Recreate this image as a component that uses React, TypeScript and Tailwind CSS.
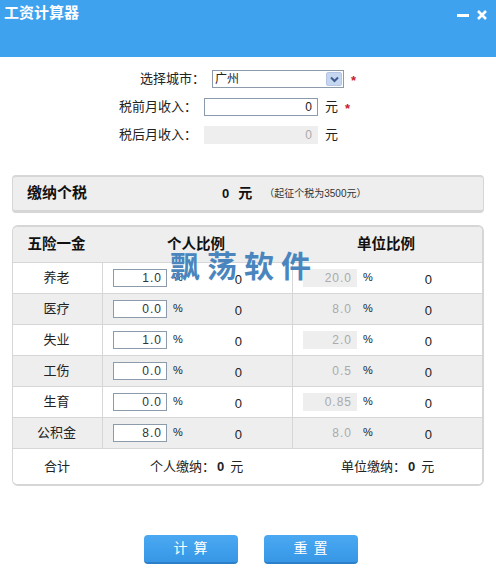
const FONT = "font-['Liberation_Sans','Noto_Sans_CJK_SC',sans-serif]"

type Row = { name: string; own: string; unit: string; unitBox: boolean }

const ROWS: Row[] = [
  { name: '养老', own: '1.0', unit: '20.0', unitBox: true },
  { name: '医疗', own: '0.0', unit: '8.0', unitBox: false },
  { name: '失业', own: '1.0', unit: '2.0', unitBox: true },
  { name: '工伤', own: '0.0', unit: '0.5', unitBox: false },
  { name: '生育', own: '0.0', unit: '0.85', unitBox: true },
  { name: '公积金', own: '8.0', unit: '8.0', unitBox: false },
]

function FormRow({ label, children }: { label: string; children: React.ReactNode }) {
  return (
    <div className="flex h-[18px] items-center">
      <span className="w-[197px] text-right text-[13px] text-[#222]">{label}</span>
      {children}
    </div>
  )
}

function Star() {
  return <span className="text-[13px] font-bold text-[#c8202c]">*</span>
}

function RateRow({ row, shaded }: { row: Row; shaded: boolean }) {
  return (
    <div className={`grid h-[31px] grid-cols-[90px_190px_189px] border-b border-[#d6d6d6] text-[13px] ${shaded ? 'bg-[#eeeeee]' : 'bg-white'}`}>
      <div className="flex items-center justify-center border-r border-[#d6d6d6] pr-[2px] text-[#222]">{row.name}</div>
      <div className="flex items-center border-r border-[#d6d6d6] pl-[10px]">
        <div className="flex h-[18px] w-[54px] items-center justify-end border border-[#8b9bac] bg-white pr-[4px] text-[12px] tracking-[1px] text-[#333]">
          {row.own}
        </div>
        <span className="ml-[6px] mb-[2px] text-[11px] text-[#222]">%</span>
        <span className="ml-[52px] mt-[3px] text-[#222]">0</span>
      </div>
      <div className="flex items-center pl-[10px]">
        <div className={`flex h-[18px] w-[54px] items-center justify-end pr-[5px] text-[12px] tracking-[1px] text-[#aaa] ${row.unitBox ? 'bg-[#eeeeee]' : ''}`}>
          {row.unit}
        </div>
        <span className="ml-[6px] mb-[2px] text-[11px] text-[#222]">%</span>
        <span className="ml-[52px] mt-[3px] text-[#222]">0</span>
      </div>
    </div>
  )
}

export default function App() {
  return (
    <div className={`relative h-[576px] w-[496px] overflow-hidden bg-white ${FONT}`}>
      <header className="flex h-[57px] items-start justify-between bg-[#3fa2ee] pl-[4px] pr-[9px] pt-[2px]">
        <span className="text-[15px] font-bold text-white">工资计算器</span>
        <div className="mt-[8px] flex items-center gap-[8px]">
          <svg width="12" height="10" viewBox="0 0 12 10">
            <rect x="0" y="4" width="12" height="3" fill="#fff" />
          </svg>
          <svg width="10" height="10" viewBox="0 0 10 10">
            <path d="M1 1l8 8M9 1l-8 8" stroke="#fff" strokeWidth="2.6" />
          </svg>
        </div>
      </header>

      <div className="mt-[13px] flex flex-col gap-[10px]">
        <div className="flex h-[18px] items-center">
          <span className="w-[205px] text-right text-[13px] text-[#222]">选择城市：</span>
          <div className="ml-[7px] flex h-[18px] w-[132px] items-center justify-between border border-[#8b9bac] bg-white pl-[2px] pr-[1px] text-[12px] text-[#222]">
            广州
            <span className="flex h-[14px] w-[16px] items-center justify-center rounded-[2px] border border-[#b4c6e4] bg-[#c5d6f0]">
              <svg width="9" height="7" viewBox="0 0 9 7">
                <path d="M1 1.5l3.5 3.5L8 1.5" fill="none" stroke="#3f5c8e" strokeWidth="2" />
              </svg>
            </span>
          </div>
          <span className="ml-[7px] mt-[2px]"><Star /></span>
        </div>
        <FormRow label="税前月收入：">
          <div className="ml-[7px] flex h-[18px] w-[114px] items-center justify-end border border-[#8b9bac] bg-white pr-[5px] text-[12px] text-[#222]">0</div>
          <span className="ml-[7px] text-[13px] text-[#222]">元</span>
          <span className="ml-[7px] mt-[2px]"><Star /></span>
        </FormRow>
        <FormRow label="税后月收入：">
          <div className="ml-[7px] flex h-[18px] w-[114px] items-center justify-end bg-[#eeeeee] pr-[6px] text-[12px] text-[#aaa]">0</div>
          <span className="ml-[7px] text-[13px] text-[#222]">元</span>
        </FormRow>
      </div>

      <section className="mx-[12px] mt-[31px] flex h-[38px] items-center rounded-[4px] border-x border-b-[3px] border-t-2 border-[#d6d6d6] bg-[#eeeeee] pl-[14px]">
        <b className="w-[195px] text-[15px] text-[#111]">缴纳个税</b>
        <b className="text-[13px] text-[#111]">0</b>
        <b className="ml-[9px] text-[14px] text-[#111]">元</b>
        <span className="ml-[12px] text-[10px] text-[#333]">（起征个税为3500元）</span>
      </section>

      <section className="mx-[12px] mt-[12px] h-[261px] overflow-hidden rounded-[6px] border-y-2 border-l border-r-2 border-[#d6d6d6]">
        <div className="grid h-[36px] grid-cols-[90px_190px_189px] items-center border-b border-[#d6d6d6] bg-[#eeeeee] text-[14.5px] font-bold text-[#111]">
          <span className="pr-[3px] text-center">五险一金</span>
          <span className="pr-[4px] text-center">个人比例</span>
          <span className="pr-[3px] text-center">单位比例</span>
        </div>
        {ROWS.map((row, i) => (
          <RateRow key={row.name} row={row} shaded={i % 2 === 1} />
        ))}
        <div className="grid h-[36px] grid-cols-[90px_190px_189px] items-center bg-white text-[13px] text-[#222]">
          <span className="pr-[2px] text-center">合计</span>
          <span className="pl-[47px]">个人缴纳：<b className="ml-[2px]">0</b><span className="ml-[6px]">元</span></span>
          <span className="pl-[48px]">单位缴纳：<b className="ml-[2px]">0</b><span className="ml-[6px]">元</span></span>
        </div>
      </section>

      <div className="mt-[49px] flex gap-[26px] pl-[144px]">
        {['计 算', '重 置'].map((label) => (
          <button
            key={label}
            className="h-[29px] w-[94px] rounded-[4px] border-b-2 border-[#2c7fc9] bg-gradient-to-b from-[#4ba9f2] to-[#3797e6] text-[14px] tracking-[1px] text-white"
          >
            {label}
          </button>
        ))}
      </div>

      {/* site watermark over the table */}
      <span className="absolute left-[170px] top-[250px] text-[30px] font-bold leading-[34px] tracking-[7px] text-[#4a86bd]">飘荡软件</span>
    </div>
  )
}
